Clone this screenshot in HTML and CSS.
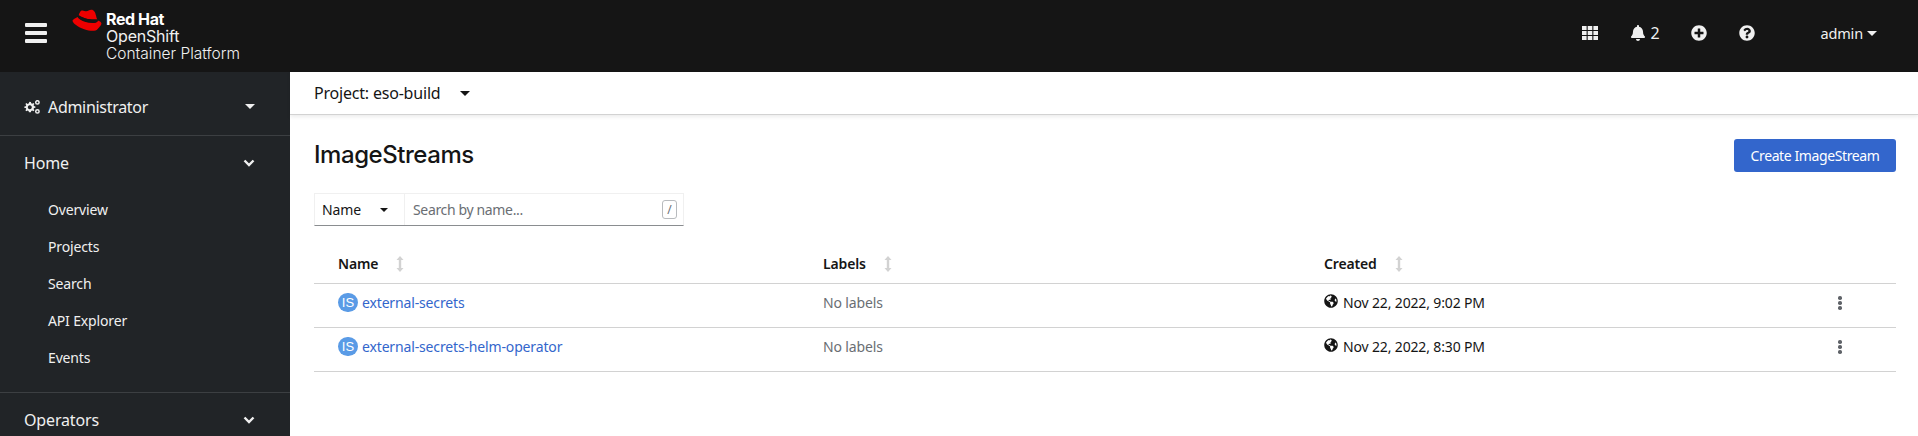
FILE: index.html
```html
<!DOCTYPE html>
<html lang="en">
<head>
<meta charset="utf-8">
<title>ImageStreams</title>
<link rel="stylesheet" href="styles.css">
</head>
<body>
<header class="masthead">
  <button class="burger" aria-label="Menu"><span></span><span></span><span></span></button>
  <div class="brand">
    <svg class="hat" viewBox="0 0 29.500 19.500" preserveAspectRatio="none"><path fill="#ee0000" d="M9 1.600C10.500 .6 12.500 2 14 2c1.800 0 2.800-1.400 5-1.400 2.500 0 4 2.400 4.600 5.200.3 1.400.7 2.600 1.300 3.400l-1.200.1C18 9.800 10.500 8 6.600 5.500 7.200 4 7.900 2.400 9 1.600z"/><path fill="#ee0000" d="M5.700 7C5 7.400.6 9 .5 10.400c-.1 1.800 4.500 5.400 11.500 7.600 6.600 2 11.600 1.600 13-.1 2-2.300 4.300-3.400 3.800-5.400-.3-1.200-1.700-2-3.500-2.400-.1 1.600-1.800 2.400-4.800 2.200C14.300 12.300 6.900 9.800 5.700 7z"/><path fill="#151515" d="M6.600 5.500C10.500 8 18 9.800 23.700 9.300l1.300-.1.300 1.100c0 1.300-1.800 2.100-4.600 1.900C14.600 11.800 7 9.500 5.700 7z"/></svg>
    <div class="brand-text">
      <div class="brand-top">Red Hat</div>
      <div class="brand-line brand-product">OpenShift</div>
      <div class="brand-line">Container Platform</div>
    </div>
  </div>
  <div class="tools">
    <svg class="grid-icon" viewBox="0 0 16 14"><path d="M0 0h4.600v4H0zM5.700 0h4.600v4H5.700zM11.400 0H16v4h-4.600zM0 5h4.600v4H0zM5.700 5h4.600v4H5.700zM11.400 5H16v4h-4.600zM0 10h4.600v4H0zM5.700 10h4.600v4H5.700zM11.400 10H16v4h-4.600z"/></svg>
    <div class="notif">
      <svg class="bell" viewBox="0 0 448 512"><path d="M224 512c35.320 0 63.970-28.650 63.970-64H160.030c0 35.350 28.650 64 63.970 64zm215.390-149.710c-19.320-20.760-55.470-51.990-55.470-154.290 0-77.700-54.480-139.900-127.940-155.160V32c0-17.670-14.320-32-31.980-32s-31.980 14.330-31.980 32v20.840C118.560 68.100 64.080 130.300 64.080 208c0 102.300-36.150 133.530-55.470 154.290-6 6.450-8.660 14.160-8.610 21.710.11 16.400 12.980 32 32.100 32h383.800c19.120 0 32-15.600 32.100-32 .05-7.550-2.610-15.270-8.610-21.710z"/></svg>
      <span>2</span>
    </div>
    <svg class="circle-icon plus" viewBox="0 0 512 512"><path d="M256 8C119 8 8 119 8 256s111 248 248 248 248-111 248-248S393 8 256 8zm144 276c0 6.600-5.400 12-12 12h-92v92c0 6.600-5.400 12-12 12h-56c-6.600 0-12-5.400-12-12v-92h-92c-6.600 0-12-5.400-12-12v-56c0-6.600 5.400-12 12-12h92v-92c0-6.600 5.400-12 12-12h56c6.600 0 12 5.400 12 12v92h92c6.600 0 12 5.400 12 12v56z"/></svg>
    <svg class="circle-icon help" viewBox="0 0 512 512"><path d="M504 256c0 136.997-111.043 248-248 248S8 392.997 8 256C8 119.083 119.043 8 256 8s248 111.083 248 248zM262.655 90c-54.497 0-89.255 22.957-116.549 63.758-3.536 5.286-2.353 12.415 2.715 16.258l34.699 26.310c5.205 3.947 12.621 3.008 16.665-2.122 17.864-22.658 30.113-35.797 57.303-35.797 20.429 0 45.698 13.148 45.698 32.958 0 14.976-12.363 22.667-32.534 33.976C247.128 238.528 216 254.941 216 296v4c0 6.627 5.373 12 12 12h56c6.627 0 12-5.373 12-12v-1.333c0-28.462 83.186-29.647 83.186-106.667 0-58.002-60.165-102-116.531-102zM256 338c-25.365 0-46 20.635-46 46 0 25.364 20.635 46 46 46s46-20.636 46-46c0-25.365-20.635-46-46-46z"/></svg>
    <div class="user"><span>admin</span><i class="caret caret-light"></i></div>
  </div>
</header>
<div class="shell">
  <nav class="sidebar">
    <div class="perspective">
      <svg class="cogs" viewBox="0 0 16 14"><path d="M5.500 1.800l1.400.1.300 1.400 1 .4 1.200-.8 1 1-.8 1.200.4 1 1.400.3v1.400l-1.400.3-.4 1 .8 1.200-1 1-1.200-.8-1 .4-.3 1.400H4.900l-.3-1.400-1-.4-1.200.8-1-1 .8-1.200-.4-1L.4 8V6.600l1.400-.3.4-1-.8-1.200 1-1 1.200.8 1-.4zM5.800 5.300a2 2 0 1 0 .01 0z" fill-rule="evenodd"/><circle class="cog-small" cx="13.400" cy="2.400" r="1.700"/><circle class="cog-small" cx="13.400" cy="11.400" r="1.700"/></svg>
      <span class="perspective-label">Administrator</span>
      <i class="caret caret-light caret-nav"></i>
    </div>
    <div class="nav-section">
      <div class="nav-head"><span>Home</span><svg class="chev" viewBox="0 0 12 8"><path d="M1.500 1.500L6 6l4.500-4.500"/></svg></div>
      <ul class="nav-list">
        <li>Overview</li>
        <li>Projects</li>
        <li>Search</li>
        <li>API Explorer</li>
        <li>Events</li>
      </ul>
    </div>
    <div class="nav-section">
      <div class="nav-head"><span>Operators</span><svg class="chev" viewBox="0 0 12 8"><path d="M1.500 1.500L6 6l4.500-4.500"/></svg></div>
    </div>
  </nav>
  <main class="content">
    <div class="project-bar"><span>Project: eso-build</span><i class="caret caret-dark"></i></div>
    <div class="page-head">
      <h1>ImageStreams</h1>
      <button class="primary">Create ImageStream</button>
    </div>
    <div class="filter">
      <div class="filter-type"><span>Name</span><i class="caret caret-dark caret-small"></i></div>
      <div class="filter-input"><span class="placeholder">Search by name...</span><kbd>/</kbd></div>
    </div>
    <div class="table">
      <div class="row row-head">
        <div class="th">Name<svg class="sort" viewBox="0 0 8 16"><path d="M4 0L7.500 4H5.200v8h2.300L4 16 .5 12h2.300V4H.5z"/></svg></div>
        <div class="th">Labels<svg class="sort" viewBox="0 0 8 16"><path d="M4 0L7.500 4H5.200v8h2.300L4 16 .5 12h2.300V4H.5z"/></svg></div>
        <div class="th">Created<svg class="sort" viewBox="0 0 8 16"><path d="M4 0L7.500 4H5.200v8h2.300L4 16 .5 12h2.300V4H.5z"/></svg></div>
        <div></div>
      </div>
      <div class="row">
        <div class="td"><span class="badge">IS</span><a class="link">external-secrets</a></div>
        <div class="td muted">No labels</div>
        <div class="td"><svg class="globe" viewBox="0 0 496 512"><use href="#globe-path"/></svg><span>Nov 22, 2022, 9:02 PM</span></div>
        <div class="td kebab"><i></i><i></i><i></i></div>
      </div>
      <div class="row">
        <div class="td"><span class="badge">IS</span><a class="link">external-secrets-helm-operator</a></div>
        <div class="td muted">No labels</div>
        <div class="td"><svg class="globe" viewBox="0 0 496 512"><use href="#globe-path"/></svg><span>Nov 22, 2022, 8:30 PM</span></div>
        <div class="td kebab"><i></i><i></i><i></i></div>
      </div>
    </div>
  </main>
</div>
<svg class="defs" width="0" height="0"><defs><path id="globe-path" d="M248 8C111.030 8 0 119.030 0 256s111.030 248 248 248 248-111.030 248-248S384.970 8 248 8zm82.290 357.600c-3.900 3.880-7.990 7.950-11.310 11.280-2.990 3-5.100 6.700-6.170 10.710-1.510 5.660-2.730 11.380-4.770 16.870l-17.390 46.850c-13.760 3-28 4.690-42.650 4.690v-27.380c1.690-12.620-7.640-36.260-22.630-51.250-6-6-9.370-14.140-9.370-22.630v-32.010c0-11.640-6.270-22.340-16.460-27.970-14.370-7.950-34.810-19.060-48.810-26.110-11.480-5.780-22.100-13.140-31.650-21.750l-.8-.72a114.792 114.792 0 0 1-18.060-20.740c-9.380-13.770-24.660-36.420-34.590-51.140 20.470-45.500 57.360-82.040 103.200-101.890l24.010 12.010C203.480 89.740 216 82.010 216 70.110v-11.300c7.990-1.290 16.120-2.110 24.390-2.400l28.300 28.300c6.250 6.250 6.250 16.380 0 22.630L264 112l-10.340 10.340c-3.120 3.120-3.120 8.190 0 11.310l4.690 4.690c3.120 3.120 3.120 8.190 0 11.310l-8 8a8.008 8.008 0 0 1-5.660 2.340h-8.990c-2.080 0-4.080.81-5.580 2.270l-9.920 9.650a8.008 8.008 0 0 0-1.580 9.310l15.590 31.190c2.660 5.320-1.210 11.580-7.150 11.580h-5.640c-1.930 0-3.790-.7-5.240-1.960l-9.280-8.060a16.017 16.017 0 0 0-15.550-3.100l-31.170 10.390a11.950 11.950 0 0 0-8.170 11.340c0 4.530 2.560 8.660 6.610 10.690l11.080 5.540c9.410 4.710 19.790 7.160 30.310 7.160s22.590 27.290 32 32h66.750c8.490 0 16.620 3.370 22.630 9.370l13.690 13.690a30.503 30.503 0 0 1 8.930 21.570 46.536 46.536 0 0 1-13.720 32.980zM417 274.250c-5.790-1.450-10.840-5-14.150-9.970l-17.980-26.970a23.970 23.970 0 0 1 0-26.620l19.590-29.380c2.320-3.470 5.500-6.290 9.240-8.150l12.980-6.490C440.200 193.590 448 223.870 448 256c0 8.670-.74 17.160-1.820 25.540L417 274.250z"/></defs></svg>
</body>
</html>
```
FILE: styles.css
```css
* { box-sizing: border-box; }
html, body { margin: 0; height: 100%; overflow: hidden; }
body { font-family: "Noto Sans", "Liberation Sans", sans-serif; font-size: 14px; letter-spacing: -.15px; color: #151515; background: #fff; display: flex; flex-direction: column; }
.defs { display: block; height: 0; }

.masthead { height: 72px; flex: none; background: #151515; color: #f0f0f0; display: flex; align-items: center; padding-bottom: 6px; }
.burger { background: none; border: 0; padding: 0; margin-left: 25px; width: 22px; display: flex; flex-direction: column; gap: 4px; }
.burger span { display: block; height: 4px; background: #f0f0f0; border-radius: 1px; }
.brand { display: flex; margin-left: 25px; align-self: flex-start; margin-top: 9px; }
.hat { width: 30px; height: 22px; flex: none; }
.brand-text { margin-left: 4px; color: #f0f0f0; letter-spacing: 0; }
.brand-top { font-family: "Inter", sans-serif; font-weight: 700; font-size: 16px; line-height: 17px; letter-spacing: -.4px; margin-top: 2px; color: #fff; }
.brand-line { font-family: "Inter", sans-serif; font-size: 15.500px; font-weight: 300; line-height: 17px; }
.brand-product { font-size: 16px; font-weight: 400; letter-spacing: -.2px; }
.tools { margin-left: auto; display: flex; align-items: center; padding-right: 41px; }
.grid-icon { width: 16px; height: 14px; fill: #f0f0f0; }
.notif { display: flex; align-items: center; margin-left: 33px; font-size: 16px; gap: 5px; }
.bell { width: 14px; height: 16px; fill: #f0f0f0; }
.circle-icon { width: 16px; height: 16px; fill: #f0f0f0; }
.plus { margin-left: 32px; }
.help { margin-left: 32px; }
.user { display: flex; align-items: center; margin-left: 65px; font-size: 14.500px; gap: 4px; }
.caret { display: block; width: 0; height: 0; border-left: 5px solid transparent; border-right: 5px solid transparent; border-top: 5px solid; }
.caret-light { border-top-color: #f0f0f0; }
.caret-dark { border-top-color: #151515; }
.caret-small { border-left-width: 4px; border-right-width: 4px; border-top-width: 4px; }

.shell { flex: 1; display: flex; min-height: 0; }
.sidebar { width: 290px; flex: none; background: #212427; color: #f0f0f0; overflow: hidden; }
.perspective { height: 64px; display: flex; align-items: center; padding: 6px 24px 0; border-bottom: 1px solid #3c3f42; font-size: 16px; letter-spacing: -.3px; }
.cogs { width: 16px; height: 14px; fill: #f0f0f0; flex: none; }
.cog-small { fill: none; stroke: #f0f0f0; stroke-width: 1.500; }
.perspective-label { margin-left: 8px; }
.caret-nav { margin-left: auto; margin-right: 11px; }
.nav-section { border-bottom: 1px solid #3c3f42; }
.nav-head { display: flex; align-items: center; justify-content: space-between; padding: 0 35px 0 24px; height: 54px; font-size: 16px; }
.chev { width: 12px; height: 8px; fill: none; stroke: #f0f0f0; stroke-width: 2.400; }
.nav-list { list-style: none; margin: 0; padding: 1px 0 16px 48px; }
.nav-list li { height: 37px; line-height: 37px; font-size: 14px; }
.nav-section:last-child { border-bottom: 0; }

.content { flex: 1; min-width: 0; }
.project-bar { height: 43px; display: flex; align-items: center; padding: 0 24px; font-size: 16px; letter-spacing: -.2px; border-bottom: 1px solid #d2d2d2; box-shadow: 0 2px 4px rgba(3,3,3,.08); gap: 20px; }
.page-head { display: flex; justify-content: space-between; align-items: center; padding: 24px 22px 0 24px; height: 57px; }
h1 { font-family: "Inter", sans-serif; font-size: 24px; font-weight: 500; margin: -3px 0 0; letter-spacing: -.45px; }
.primary { background: #3366cc; color: #fff; border: 0; border-radius: 3px; font: inherit; letter-spacing: -.4px; width: 162px; height: 33px; padding: 0; }
.filter { display: flex; width: 370px; height: 33px; margin: 21px 0 0 24px; border: 1px solid #f0f0f0; border-bottom: 1px solid #8a8d90; }
.filter-type { width: 90px; display: flex; align-items: center; justify-content: space-between; padding: 0 16px 0 7px; border-right: 1px solid #f0f0f0; }
.filter-input { flex: 1; display: flex; align-items: center; justify-content: space-between; padding: 0 6px 0 8px; color: #6a6e73; }
.placeholder { letter-spacing: -.35px; }
kbd { font-family: inherit; font-size: 12px; width: 15px; height: 19px; line-height: 17px; text-align: center; border: 1px solid #b8bbbe; border-radius: 3px; }
.table { margin: 21px 22px 0 24px; }
.row { display: grid; grid-template-columns: 485px 501px 1fr 120px; height: 44px; border-bottom: 1px solid #d2d2d2; }
.row-head { height: 37px; padding-bottom: 3px; }
.th { padding: 0 0 0 24px; font-weight: 600; font-size: 14px; display: flex; align-items: center; gap: 18px; }
.sort { width: 8px; height: 16px; fill: #d2d2d2; }
.td { padding: 9px 0 0 24px; display: flex; align-items: flex-start; line-height: 20px; }
.muted { color: #6a6e73; }
.badge { width: 20px; height: 19px; border-radius: 10px; background: #5a9be6; color: #fff; font-family: "Liberation Sans", sans-serif; font-size: 13px; line-height: 19px; letter-spacing: 0; text-align: center; margin-right: 4px; flex: none; }
.link { color: #3366cc; }
.globe { width: 14px; height: 14px; fill: #151515; margin: 1px 5px 0 0; flex: none; }
.kebab { flex-direction: column; gap: 1.500px; padding: 12px 0 0 62px; }
.kebab i { display: block; width: 3.500px; height: 3.500px; border-radius: 50%; background: #5f6368; }
```
